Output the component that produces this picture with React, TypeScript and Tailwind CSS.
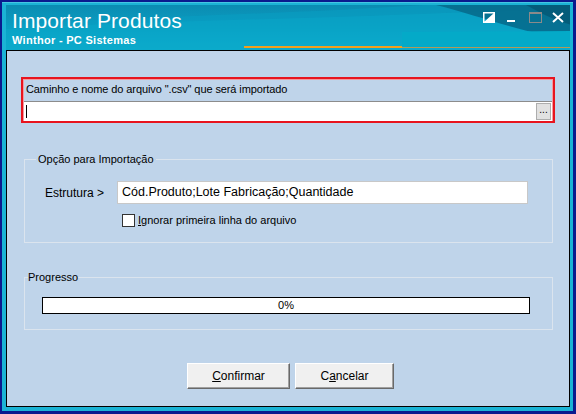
import React from 'react';

const ui = { fontFamily: '"Liberation Sans", Arial, sans-serif' };

function TitleBar() {
  return (
    <div className="relative h-[45px] overflow-hidden bg-[linear-gradient(180deg,#0b8cb2_0%,#0a9cc0_45%,#0db3d2_80%,#10bcd8_100%)]">
      <svg className="absolute inset-0" width="566" height="45" viewBox="0 0 566 45">
        <path d="M0 20 C 120 12, 260 10, 420 0 L566 0 L566 45 L0 45 Z" fill="#0a9fc3" opacity="0.55" />
        <path d="M0 24 C 140 16, 300 14, 440 8 L566 4 L566 45 L0 45 Z" fill="#0ba9ca" opacity="0.45" />
        <path d="M430 0 C 470 10, 500 22, 540 30 L566 30 L566 0 Z" fill="#06688a" opacity="0.85" />
        <path d="M520 0 C 535 8, 545 14, 566 20 L566 0 Z" fill="#045a78" opacity="0.9" />
        <path d="M396 27 L566 26 L566 42 L396 42 Z" fill="#04aac8" />
        <rect x="238" y="41" width="158" height="2" fill="#f2a01c" />
        <rect x="396" y="42" width="170" height="1" fill="#b49a55" />
      </svg>
      <div className="relative pl-[6px] pt-[4px] text-white" style={ui}>
        <div className="text-[21px] leading-[24px] tracking-[0.1px]">Importar Produtos</div>
        <div className="text-[11px] font-bold leading-[14px] tracking-[0.3px]">Winthor - PC Sistemas</div>
      </div>
      {/* window buttons */}
      <div className="absolute top-[7px] left-[477px] flex items-start">
        <svg width="12" height="11" viewBox="0 0 12 11">
          <rect x="0.75" y="0.75" width="10.5" height="9.5" fill="none" stroke="#fff" strokeWidth="1.5" />
          <path d="M11 1 L11 10 L1 10 Z" fill="#fff" />
        </svg>
        <svg className="ml-[12px]" width="8" height="11" viewBox="0 0 8 11">
          <rect x="0" y="8" width="8" height="2" fill="#fff" />
        </svg>
        <svg className="ml-[14px]" width="13" height="11" viewBox="0 0 13 11">
          <rect x="0.5" y="0.5" width="12" height="10" fill="none" stroke="#8a8a8a" />
          <rect x="0" y="0" width="13" height="2" fill="#8a8a8a" />
        </svg>
        <svg className="ml-[10px]" width="12" height="11" viewBox="0 0 12 11">
          <path d="M1 1 L11 10 M11 1 L1 10" stroke="#fff" strokeWidth="2" />
        </svg>
      </div>
    </div>
  );
}

function Btn({ label, under }: { label: string; under: number }) {
  return (
    <button
      className="w-full h-[26px] flex items-center justify-center bg-[#f0f0f0] border border-t-white border-l-white border-r-[#696969] border-b-[#696969] shadow-[inset_-1px_-1px_0_#a0a0a0] text-[12px] text-black"
      style={ui}
    >
      {label.slice(0, under)}
      <span className="underline">{label[under]}</span>
      {label.slice(under + 1)}
    </button>
  );
}

export default function App() {
  return (
    <div className="w-[576px] h-[414px] bg-[#0a1a8e] pt-[2px] pl-[2px] pr-[3px] pb-[3px]">
      <div className="h-[409px] bg-[#1bb3d5] pt-[3px] pl-[4px] pr-[3px] pb-[4px] flex flex-col shadow-[inset_0_1px_0_#46c6e2]">
        <TitleBar />
        <div className="h-[357px] border border-black bg-[#bfd4ea] flex flex-col text-black" style={ui}>
          {/* caminho do arquivo */}
          <div className="mt-[26px] ml-[14px] w-[534px] h-[46px] border-2 border-[#e8141e] shadow-[inset_0_0_0_1px_#f29aa0] px-[1px] flex flex-col">
            <div className="h-[22px] pl-[2px] pt-[3px] text-[11px] leading-[14px] tracking-[-0.1px]">
              Caminho e nome do arquivo ".csv" que será importado
            </div>
            <div className="h-[20px] bg-white border-t border-[#8c8c8c] flex items-center justify-between pl-[2px] pr-[1px]">
              <div className="w-px h-[13px] bg-black" />
              <div className="w-[15px] h-[17px] bg-[#e1e1e1] border border-[#adadad] flex items-center justify-center text-[10px] leading-none pb-[3px]">
                ...
              </div>
            </div>
          </div>

          {/* opção para importação */}
          <fieldset className="mt-[29px] ml-[17px] w-[529px] h-[91px] border border-[#dbe4ee]">
            <legend className="ml-[11px] px-[2px] text-[11px] leading-[14px]">Opção para Importação</legend>
            <div className="mt-[15px] flex items-center">
              <div className="ml-[20px] w-[72px] text-[12px]">Estrutura &gt;</div>
              <div className="w-[411px] h-[23px] bg-white border border-[#c8c8c8] flex items-center pl-[4px] text-[12.5px]">
                Cód.Produto;Lote Fabricação;Quantidade
              </div>
            </div>
            <div className="mt-[10px] ml-[97px] flex items-center">
              <div className="w-[13px] h-[13px] bg-white border border-[#333]" />
              <div className="ml-[3px] text-[11px] leading-[13px]">
                <span className="underline">I</span>gnorar primeira linha do arquivo
              </div>
            </div>
          </fieldset>

          {/* progresso */}
          <fieldset className="mt-[27px] ml-[17px] w-[529px] h-[60px] border border-[#dbe4ee]">
            <legend className="ml-[3px] text-[11px] leading-[14px]">Progresso</legend>
            <div className="mt-[13px] ml-[17px] w-[488px] h-[17px] bg-white border border-black flex items-center justify-center text-[11px] text-black">
              0%
            </div>
          </fieldset>

          {/* botões */}
          <div className="mt-[33px] ml-[180px] flex gap-[5px]">
            <div className="w-[103px]">
              <Btn label="Confirmar" under={0} />
            </div>
            <div className="w-[99px]">
              <Btn label="Cancelar" under={1} />
            </div>
          </div>
        </div>
      </div>
    </div>
  );
}
